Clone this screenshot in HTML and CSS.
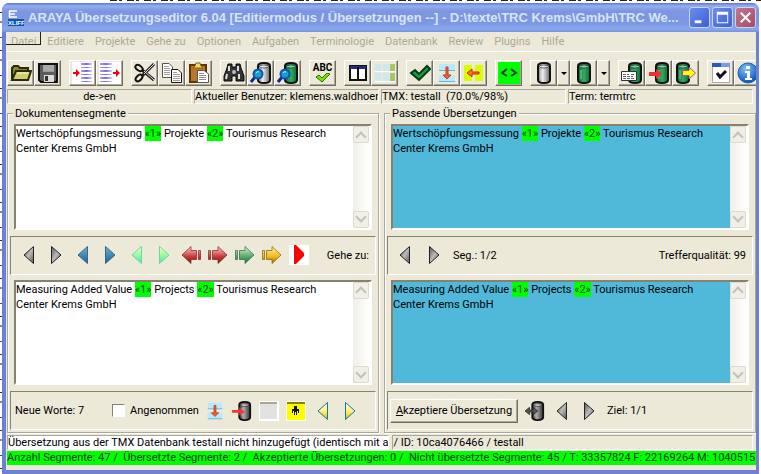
FILE: index.html
```html
<!DOCTYPE html>
<html lang="de">
<head>
<meta charset="utf-8">
<title>ARAYA Übersetzungseditor</title>
<link rel="stylesheet" href="styles.css">
</head>
<body>
<svg class="defs" aria-hidden="true">
  <defs>
    <linearGradient id="gGrey"><stop offset="0" stop-color="#777"/><stop offset=".4" stop-color="#eee"/><stop offset="1" stop-color="#666"/></linearGradient>
    <linearGradient id="gDark"><stop offset="0" stop-color="#333"/><stop offset=".4" stop-color="#aaa"/><stop offset="1" stop-color="#333"/></linearGradient>
    <linearGradient id="gGreen"><stop offset="0" stop-color="#0a6a36"/><stop offset=".5" stop-color="#2fae62"/><stop offset="1" stop-color="#0a6a36"/></linearGradient>
    <linearGradient id="tGrey" x2="1" y2="1"><stop offset="0" stop-color="#555"/><stop offset=".5" stop-color="#bbb"/><stop offset="1" stop-color="#555"/></linearGradient>
    <linearGradient id="tBlue" x2="0" y2="1"><stop offset="0" stop-color="#6fb4d0"/><stop offset="1" stop-color="#1f5f96"/></linearGradient>
    <linearGradient id="tMint" x2="0" y2="1"><stop offset="0" stop-color="#ffffb0"/><stop offset="1" stop-color="#3cf09c"/></linearGradient>
    <linearGradient id="tGold" x2="0" y2="1"><stop offset="0" stop-color="#fff"/><stop offset=".5" stop-color="#fff080"/><stop offset="1" stop-color="#e0b800"/></linearGradient>
    <linearGradient id="aRed" x2="0" y2="1"><stop offset="0" stop-color="#ffd0d0"/><stop offset=".6" stop-color="#c83838"/><stop offset="1" stop-color="#801010"/></linearGradient>
    <linearGradient id="aGreen" x2="0" y2="1"><stop offset="0" stop-color="#d8f4d8"/><stop offset=".6" stop-color="#58a868"/><stop offset="1" stop-color="#1c6c3c"/></linearGradient>
    <linearGradient id="aGold" x2="0" y2="1"><stop offset="0" stop-color="#fff4a0"/><stop offset=".6" stop-color="#f0b818"/><stop offset="1" stop-color="#a06800"/></linearGradient>
    <linearGradient id="lines"><stop offset="0" stop-color="#b49cf4"/><stop offset=".5" stop-color="#7468e4"/><stop offset="1" stop-color="#d8ccff"/></linearGradient>
    <radialGradient id="info" cx=".4" cy=".3" r=".7"><stop offset="0" stop-color="#7fc4ff"/><stop offset="1" stop-color="#0a50b8"/></radialGradient>

    <g id="can"><path d="M5 4Q5 1 11 1T17 4V18Q17 21 11 21T5 18Z" stroke="#111" stroke-width="2"/><ellipse cx="11" cy="4.500" rx="4.500" ry="1.500" fill="#fff" fill-opacity=".45" stroke="#111" stroke-opacity=".6"/><path d="M8 8V17" stroke="#fff" stroke-opacity=".5" stroke-width="1" fill="none"/></g>
    <symbol id="i-open" viewBox="0 0 22 22"><path d="M2 17V6L4 4H8L10 6H18V9" fill="#8a8632" stroke="#2c2a08" stroke-width="2"/><path d="M2 18L6 9H21L18 18Z" fill="#d0cc70" stroke="#2c2a08" stroke-width="2"/><path d="M7 11H18" stroke="#fffcc0" stroke-width="1"/></symbol>
    <symbol id="i-save" viewBox="0 0 22 22"><path d="M2 2H20V20H4L2 18Z" fill="#5c5c5c" stroke="#111" stroke-width="2"/><path d="M6 3H17V10H6Z" fill="#999"/><path d="M6 4H17M6 6H17M6 8H17" stroke="#bbb"/><path d="M7 13H17V20H7Z" fill="#ddd"/><path d="M8 14H11V19H8Z" fill="#333"/></symbol>
    <symbol id="i-in" viewBox="0 0 22 22"><path fill="#fff" d="M0 0H22V22H0Z"/><path fill="url(#lines)" d="M9 1H20V3H9ZM9 5H20V6H9ZM9 8H20V10H9ZM9 12H20V13H9ZM9 15H20V17H9ZM9 19H20V20H9Z"/><path fill="#f00010" d="M1 10H4V7L8 11L4 15V12H1Z"/></symbol>
    <symbol id="i-out" viewBox="0 0 22 22"><path fill="#fff" d="M0 0H22V22H0Z"/><path fill="url(#lines)" d="M1 1H13V3H1ZM1 5H13V6H1ZM1 8H13V10H1ZM1 12H13V13H1ZM1 15H13V17H1ZM1 19H13V20H1Z"/><path fill="#f00010" d="M14 10H17V7L21 11L17 15V12H14Z"/></symbol>
    <symbol id="i-cut" viewBox="0 0 22 22"><path d="M20 2L8 14M20 18L8 8" stroke="#222" stroke-width="3"/><path d="M20 2L10 12M20 18L10 9" stroke="#ddd" stroke-width="1"/><ellipse cx="5" cy="6" rx="4" ry="2.500" transform="rotate(35 5 6)" fill="none" stroke="#111" stroke-width="2"/><ellipse cx="5" cy="16" rx="4" ry="2.500" transform="rotate(-45 5 16)" fill="none" stroke="#111" stroke-width="2"/></symbol>
    <symbol id="i-copy" viewBox="0 0 22 22"><g fill="#fff" stroke="#555"><path d="M1.500 1.500H8L11.500 5V15.500H1.500Z"/><path d="M10.500 7.500H17L20.500 11V20.500H10.500Z" stroke="#111"/></g><path d="M3 4.500H8M3 6.500H9M3 8.500H9M3 10.500H9M3 12.500H9M12 10.500H16M12 12.500H19M12 14.500H19M12 16.500H19M12 18.500H19" stroke="#a59a94"/></symbol>
    <symbol id="i-paste" viewBox="0 0 22 22"><path d="M2 3H18V20H2Z" fill="#b87828" stroke="#5c3608" stroke-width="2"/><path d="M7 4L8 1H12L13 4L15 6H5Z" fill="#f8dc58" stroke="#806010"/><path d="M9.500 8.500H16L20.500 12V20.500H9.500Z" fill="#fff" stroke="#555"/><path d="M11 11.500H16M11 13.500H18M11 15.500H18M11 17.500H18" stroke="#918b88"/></symbol>
    <symbol id="i-find" viewBox="0 0 22 22"><path d="M5 2H9V5H13V2H17L18 6L21 14V19H13V14H9V19H1V14L4 6Z" fill="#333" stroke="#080808"/><path d="M6 4V9M15 4V9M4 12L3 17M16 12L16 17" stroke="#ddd" stroke-width="2"/><circle cx="11" cy="10" r="2" fill="#bbb"/></symbol>
    <g id="lens"><path d="M6 14L1 20" stroke="#102890" stroke-width="3"/><circle cx="8" cy="12" r="4.500" fill="#18a0c8" stroke="#1850b0" stroke-width="2"/><path d="M6 11Q7 9 9 10" stroke="#9ff" fill="none"/></g>
    <symbol id="i-findgrey" viewBox="0 0 22 22"><use href="#can" x="3" fill="url(#gGrey)"/><use href="#lens"/></symbol>
    <symbol id="i-findgreen" viewBox="0 0 22 22"><use href="#can" x="3" fill="url(#gGreen)"/><use href="#lens"/></symbol>
    <symbol id="i-tick" viewBox="0 0 22 22"><path d="M2 11L6 8L10 12L18 4L21 7L10 18Z" fill="#18a040" stroke="#063c14" stroke-width="2"/></symbol>
    <symbol id="i-smalltick" viewBox="0 0 16 10"><path d="M1 4L4 2L7 5L12 0L15 1L7 9Z" fill="#7ce000" stroke="#2c7400"/></symbol>
    <symbol id="i-cols" viewBox="0 0 22 22"><path fill="#fff" stroke="#111" stroke-width="2" d="M3 4H19V18H3Z"/><path fill="#2a2a80" d="M3 4H19V7H3Z"/><path fill="#111" d="M10 5H12V18H10Z"/></symbol>
    <symbol id="i-grid" viewBox="0 0 22 22"><path fill="#cbe9ec" d="M1 2H7V9H1ZM9 2H15V9H9ZM1 11H7V19H1ZM9 11H15V19H9Z"/><path fill="#aac26c" d="M16 2H21V9H16ZM16 11H21V19H16Z"/><path d="M1 9.500H21M1 19.500H21" stroke="#fff"/></symbol>
    <symbol id="i-down" viewBox="0 0 22 22"><path fill="#b9e9fb" d="M3 2H19V9H3ZM3 13H19V20H3Z"/><path stroke="#58bce8" d="M3 8.500H19M3 19.500H19"/><path fill="#f06030" stroke="#c83c20" d="M10 5H12V13H15L11 17L7 13H10Z"/></symbol>
    <symbol id="i-left" viewBox="0 0 22 22"><path fill="#d8ff00" d="M1 3H9V19H1ZM12 3H20V19H12Z"/><path fill="#f08000" stroke="#d02000" d="M4 11L9 7V10H16V12H9V15Z"/></symbol>
    <symbol id="i-tags" viewBox="0 0 22 22"><path fill="#0f0" d="M0 0H22V22H0Z"/><path d="M9 7L4 11L9 14M13 7L18 11L13 14" fill="none" stroke="#063c06" stroke-width="2"/></symbol>
    <symbol id="i-cangrey" viewBox="0 0 22 22"><use href="#can" fill="url(#gGrey)"/></symbol>
    <symbol id="i-cangreen" viewBox="0 0 22 22"><use href="#can" fill="url(#gGreen)"/></symbol>
    <symbol id="i-cancard" viewBox="0 0 22 22"><use href="#can" x="3" fill="url(#gGreen)"/><path fill="#fff" stroke="#333" d="M.5 9.500H15.500V18.500H.5Z"/><path stroke="#666" stroke-dasharray="3 1" d="M2 12.500H8M10 12.500H14M2 14.500H12M2 16.500H13"/></symbol>
    <symbol id="i-canin" viewBox="0 0 22 22"><use href="#can" x="3" fill="url(#gGreen)"/><path fill="#f03030" d="M1 10H8V7L14 12L8 17V14H1Z"/></symbol>
    <symbol id="i-canout" viewBox="0 0 22 22"><use href="#can" x="-3" fill="url(#gGreen)"/><path fill="#ff0" stroke="#a85090" d="M7.500 8.500H14V5L20.500 11L14 17V13.500H7.500Z"/></symbol>
    <symbol id="i-check" viewBox="0 0 22 22"><path fill="#fff" stroke="#aaa" d="M2.500 1.500H19.500V20.500H2.500Z"/><path fill="#2858c0" d="M2 1H20V5H2Z"/><path fill="#7a9ae8" d="M11 1H20V5H11Z"/><path d="M7 11L10 15L16 9" fill="none" stroke="#111" stroke-width="3"/></symbol>
    <symbol id="i-info" viewBox="0 0 22 22"><circle cx="11" cy="11" r="10" fill="url(#info)" stroke="#1c60b4"/><path fill="#fff" d="M9 4H13V7H9ZM8 9H13V16H15V18H8V16H10V11H8Z"/></symbol>
    <symbol id="i-candark" viewBox="0 0 22 22"><use href="#can" x="3" fill="url(#gDark)"/><path fill="#f03838" d="M0 10H8V7L14 12L8 16V13H0Z"/></symbol>
    <symbol id="i-canboth" viewBox="0 0 22 22"><use href="#can" x="3" fill="url(#gDark)"/><path fill="#555" stroke="#333" d="M0 11L5 7V10H9V7L14 11L9 15V12H5V15Z"/></symbol>
    <symbol id="i-box" viewBox="0 0 20 20"><path fill="#fff" d="M0 0H20V20H0Z"/><path fill="#e2e2e2" d="M1 1H18V18H1Z"/><path fill="#aaa690" d="M1 1H18V3H1Z"/></symbol>
    <symbol id="i-man" viewBox="0 0 20 20"><path fill="#fff" d="M0 0H20V20H0Z"/><path fill="#ff0" d="M1 1H19V19H1Z"/><path fill="#8a8200" d="M1 1H19V3H1Z"/><path fill="#111" d="M8 5H11V8H8ZM6 8H13V12H12V10H11V14H10V11H9V14H8V10H7V12H6Z"/></symbol>
    <symbol id="i-prev" viewBox="0 0 12 20"><path d="M10.500 1.500V18.500L1 10Z"/></symbol>
    <symbol id="i-next" viewBox="0 0 12 20"><path d="M1.500 1.500V18.500L11 10Z"/></symbol>
    <symbol id="i-arrow" viewBox="0 0 20 20"><path stroke-opacity=".7" d="M.5 5.500H2.500V14.500H.5ZM4.500 5.500H10V1.500L19 10L10 18.500V14.500H4.500Z"/></symbol>
    <symbol id="i-play" viewBox="0 0 20 20"><path fill="#fff" d="M0 0H20V20H0Z"/><path fill="#f00" d="M5 0H7L15 8V11L7 19H5Z"/></symbol>
  </defs>
</svg>

<div class="window">
  <header class="titlebar">
    <svg class="logo" viewBox="0 0 16 16" aria-hidden="true"><path d="M1 1H9M1 4H7M1 7H9M1.500 1V7" stroke="#fff" stroke-width="1.500"/><path fill="#0a58b0" d="M0 9H16V16H0Z"/><text x="0" y="15" class="logo-text">XLIFF</text></svg>
    <h1>ARAYA Übersetzungseditor 6.04 [Editiermodus / Übersetzungen --] - D:\texte\TRC Krems\GmbH\TRC We...</h1>
    <div class="controls">
      <button aria-label="Minimieren"><svg viewBox="0 0 20 20"><path fill="#fff" d="M5 13H12V16H5Z"/></svg></button>
      <button aria-label="Maximieren"><svg viewBox="0 0 20 20"><path fill="#fff" fill-rule="evenodd" d="M4 4H16V16H4ZM5 7V15H15V7Z"/></svg></button>
      <button class="close" aria-label="Schließen"><svg viewBox="0 0 20 20"><path stroke="#fff" stroke-width="2" d="M5 5L15 15M15 5L5 15"/></svg></button>
    </div>
  </header>

  <div class="client">
    <nav class="menu">
      <button class="current">Datei</button><button>Editiere</button><button>Projekte</button><button>Gehe zu</button><button>Optionen</button><button>Aufgaben</button><button>Terminologie</button><button>Datenbank</button><button>Review</button><button>Plugins</button><button>Hilfe</button>
    </nav>

    <div class="toolbar" role="toolbar">
      <div class="set"><button aria-label="Öffnen"><svg><use href="#i-open"/></svg></button><button aria-label="Speichern"><svg><use href="#i-save"/></svg></button></div>
      <div class="set"><button aria-label="Import"><svg><use href="#i-in"/></svg></button><button aria-label="Export"><svg><use href="#i-out"/></svg></button></div>
      <div class="set"><button aria-label="Ausschneiden"><svg><use href="#i-cut"/></svg></button><button aria-label="Kopieren"><svg><use href="#i-copy"/></svg></button><button aria-label="Einfügen"><svg><use href="#i-paste"/></svg></button></div>
      <div class="set"><button aria-label="Suchen"><svg><use href="#i-find"/></svg></button><button aria-label="TMX durchsuchen"><svg><use href="#i-findgrey"/></svg></button><button aria-label="Terme durchsuchen"><svg><use href="#i-findgreen"/></svg></button></div>
      <div class="set"><button class="spell">ABC<svg><use href="#i-smalltick"/></svg></button></div>
      <div class="set"><button aria-label="Spalten"><svg><use href="#i-cols"/></svg></button><button aria-label="Tabelle"><svg><use href="#i-grid"/></svg></button></div>
      <div class="set"><button aria-label="Akzeptieren"><svg><use href="#i-tick"/></svg></button><button aria-label="Nach unten"><svg><use href="#i-down"/></svg></button><button aria-label="Übernehmen"><svg><use href="#i-left"/></svg></button></div>
      <div class="set"><button aria-label="Tags"><svg><use href="#i-tags"/></svg></button></div>
      <div class="set"><button aria-label="TMX Datenbank"><svg><use href="#i-cangrey"/></svg></button><button class="drop" aria-label="TMX Auswahl"></button><button aria-label="Termdatenbank"><svg><use href="#i-cangreen"/></svg></button><button class="drop" aria-label="Term Auswahl"></button></div>
      <div class="set"><button aria-label="Term bearbeiten"><svg><use href="#i-cancard"/></svg></button><button aria-label="Term hinzufügen"><svg><use href="#i-canin"/></svg></button><button aria-label="Term ausgeben"><svg><use href="#i-canout"/></svg></button></div>
      <div class="set"><button aria-label="Prüfen"><svg><use href="#i-check"/></svg></button><button aria-label="Info"><svg><use href="#i-info"/></svg></button></div>
    </div>

    <div class="facts">
      <span class="cell middle">de-&gt;en</span><span class="cell">Aktueller Benutzer: klemens.waldhoer</span><span class="cell">TMX: testall&nbsp; (70.0%/98%)</span><span class="cell">Term: termtrc</span>
    </div>

    <main class="panes">
      <section class="pane">
        <h2>Dokumentensegmente</h2>
        <div class="editor">
          <div class="text" role="textbox" aria-label="Quelle">Wertschöpfungsmessung <mark>«1»</mark> Projekte <mark>«2»</mark> Tourismus Research<br>Center Krems GmbH</div>
          <div class="scroll"><button disabled aria-label="Hoch"></button><button class="dn" disabled aria-label="Runter"></button></div>
        </div>
        <div class="strip nav">
          <button aria-label="Zurück"><svg class="tri grey"><use href="#i-prev"/></svg></button>
          <button aria-label="Vor"><svg class="tri grey"><use href="#i-next"/></svg></button>
          <button aria-label="Zurück blau"><svg class="tri blue"><use href="#i-prev"/></svg></button>
          <button aria-label="Vor blau"><svg class="tri blue"><use href="#i-next"/></svg></button>
          <button aria-label="Zurück grün"><svg class="tri mint"><use href="#i-prev"/></svg></button>
          <button aria-label="Vor grün"><svg class="tri mint"><use href="#i-next"/></svg></button>
          <button aria-label="Pfeil zurück"><svg class="big red flip"><use href="#i-arrow"/></svg></button>
          <button aria-label="Pfeil vor"><svg class="big red"><use href="#i-arrow"/></svg></button>
          <button aria-label="Pfeil grün"><svg class="big green"><use href="#i-arrow"/></svg></button>
          <button aria-label="Pfeil gelb"><svg class="big gold"><use href="#i-arrow"/></svg></button>
          <button aria-label="Start"><svg class="big"><use href="#i-play"/></svg></button>
          <span class="end">Gehe zu:</span>
        </div>
        <div class="editor">
          <div class="text" role="textbox" aria-label="Ziel">Measuring Added Value <mark>«1»</mark> Projects <mark>«2»</mark> Tourismus Research<br>Center Krems GmbH</div>
          <div class="scroll"><button disabled aria-label="Hoch"></button><button class="dn" disabled aria-label="Runter"></button></div>
        </div>
        <div class="strip state">
          <span class="words">Neue Worte: 7</span>
          <label class="accept"><input type="checkbox">Angenommen</label>
          <button aria-label="Nach unten"><svg class="big"><use href="#i-down"/></svg></button>
          <button aria-label="In Datenbank"><svg class="big"><use href="#i-candark"/></svg></button>
          <button aria-label="Leer"><svg class="big"><use href="#i-box"/></svg></button>
          <button aria-label="Person"><svg class="big"><use href="#i-man"/></svg></button>
          <button aria-label="Zurück gelb"><svg class="tri yellow"><use href="#i-prev"/></svg></button>
          <button aria-label="Vor gelb"><svg class="tri yellow"><use href="#i-next"/></svg></button>
        </div>
      </section>

      <section class="pane match">
        <h2>Passende Übersetzungen</h2>
        <div class="editor">
          <div class="text" role="textbox" aria-label="Treffer Quelle">Wertschöpfungsmessung <mark>«1»</mark> Projekte <mark>«2»</mark> Tourismus Research<br>Center Krems GmbH</div>
          <div class="scroll"><button disabled aria-label="Hoch"></button><button class="dn" disabled aria-label="Runter"></button></div>
        </div>
        <div class="strip nav">
          <button aria-label="Zurück"><svg class="tri grey"><use href="#i-prev"/></svg></button>
          <button aria-label="Vor"><svg class="tri grey"><use href="#i-next"/></svg></button>
          <span class="count">Seg.: 1/2</span>
          <span class="end">Trefferqualität: 99</span>
        </div>
        <div class="editor">
          <div class="text" role="textbox" aria-label="Treffer Ziel">Measuring Added Value <mark>«1»</mark> Projects <mark>«2»</mark> Tourismus Research<br>Center Krems GmbH</div>
          <div class="scroll"><button disabled aria-label="Hoch"></button><button class="dn" disabled aria-label="Runter"></button></div>
        </div>
        <div class="strip state">
          <button class="push"><span><u>A</u>kzeptiere Übersetzung</span></button>
          <button aria-label="Datenbank"><svg class="big"><use href="#i-canboth"/></svg></button>
          <button aria-label="Zurück"><svg class="tri grey"><use href="#i-prev"/></svg></button>
          <button aria-label="Vor"><svg class="tri grey"><use href="#i-next"/></svg></button>
          <span class="count">Ziel: 1/1</span>
        </div>
      </section>
    </main>

    <footer>
      <div class="messages"><span class="cell white">Übersetzung aus der TMX Datenbank testall nicht hinzugefügt (identisch mit a</span><span class="cell">/ ID: 10ca4076466 / testall</span></div>
      <p class="totals">Anzahl Segmente: 47 /&nbsp; Übersetzte Segmente: 2 /&nbsp; Akzeptierte Übersetzungen: 0 /&nbsp; Nicht übersetzte Segmente: 45 / T: 33357824 F: 22169264 M: 1040515</p>
    </footer>
  </div>
</div>
</body>
</html>
```

FILE: styles.css
```css
* { box-sizing: border-box; }

body {
  margin: 0;
  padding: 3px 2px 0;
  min-height: 100vh;
  display: flex;
  font: 11px/15px Roboto, sans-serif;
  color: #000;
  background:
    repeating-linear-gradient(90deg, #fff 0 5px, #222 5px 12px, #fff 12px 14px, #222 14px 17px) 105px 0 / 100% 1px no-repeat,
    repeating-linear-gradient(#fff 0 12px, #333 12px 13px, #fff 13px 21px, #8a8a8a 21px 23px, #fff 23px 37px, #3648a0 37px 38px) 0 0 / 2px 100% no-repeat,
    #fff;
}

button { font: inherit; color: inherit; border: 0; padding: 0; background: none; }
svg { display: block; }
.defs { position: absolute; width: 0; height: 0; }

.window {
  flex: 1;
  min-width: 0;
  display: flex;
  flex-direction: column;
  border: solid #6c80d8;
  border-width: 0 3px 4px 4px;
  border-radius: 7px 7px 0 0;
  background: #7a96df;
}

.titlebar {
  height: 29px;
  flex: none;
  display: flex;
  align-items: center;
  gap: 4px;
  margin: 0 -3px 0 -4px;
  padding: 0 3px 0 6px;
  border-radius: 7px 7px 0 0;
  background: linear-gradient(#6078d0, #94aef0 3px, #7c96e0 8px, #7c98e2 20px, #86a8ee 26px, #7890dc);
}
.logo { width: 16px; height: 16px; flex: none; }
.logo-text { font: bold 6px "Liberation Sans", sans-serif; fill: #fff; }
h1 {
  flex: 1;
  min-width: 0;
  margin: 0;
  overflow: hidden;
  white-space: nowrap;
  font: bold 13px/18px "Liberation Sans", sans-serif;
  color: #d8e4f8;
}
.controls { display: flex; gap: 2px; }
.controls button {
  width: 21px;
  height: 21px;
  border: 1px solid #c8d4f8;
  border-radius: 3px;
  background: linear-gradient(135deg, #6c8cec, #3c60d4);
}
.controls .close { background: linear-gradient(135deg, #c07890, #a84c60); }

.client {
  flex: 1;
  min-width: 0;
  display: flex;
  flex-direction: column;
  overflow: hidden;
  background: #ece9d8;
}

.menu { display: flex; flex: none; gap: 1px; height: 20px; border-bottom: 1px solid #fff; }
.menu button { position: relative; padding: 0 5px; color: #aca899; }
.menu .current::after {
  content: "";
  position: absolute;
  inset: 0 0 6px;
  border: solid #222;
  border-width: 0 1px 1px 0;
}

.toolbar { display: flex; flex: none; gap: 8px; padding: 8px 0 3px 1px; }
.set { display: flex; flex: none; }
.toolbar button {
  width: 27px;
  height: 26px;
  flex: none;
  display: grid;
  place-items: center;
  border: 1px solid;
  border-color: #fff #716f64 #716f64 #fff;
  box-shadow: inset -1px -1px #aca899;
}
.toolbar svg { width: 22px; height: 22px; }
.toolbar .drop { width: 13px; }
.drop::before { content: ""; border: 3px solid transparent; border-top-color: #000; border-bottom: 0; }
.toolbar .spell { align-content: center; line-height: 10px; font-size: 10px; font-weight: bold; }
.toolbar .spell svg { width: 16px; height: 10px; }

.facts { display: grid; grid-template-columns: repeat(4, 1fr); gap: 2px; flex: none; padding: 0 3px 0 1px; }
.cell {
  height: 15px;
  line-height: 14px;
  overflow: hidden;
  white-space: nowrap;
  border: 1px solid;
  border-color: #aca899 #fff #fff #aca899;
}
.middle { text-align: center; }
.white { background: #fff; }

.panes { flex: 1; display: grid; grid-template-columns: 1fr 1fr; gap: 5px; padding: 1px 0 1px 1px; }
.pane {
  position: relative;
  min-width: 0;
  display: flex;
  flex-direction: column;
  margin-top: 8px;
  padding: 0 2px 2px;
  border: 1px solid #aca899;
  box-shadow: 1px 1px #fff, inset 1px 1px #fff;
}
h2 {
  align-self: flex-start;
  height: 10px;
  line-height: 12px;
  margin: -6px 0 6px 3px;
  padding: 0 2px;
  font-size: 11px;
  font-weight: normal;
  background: #ece9d8;
}
.editor {
  flex: 1 1 0;
  min-height: 60px;
  display: flex;
  margin: 0 4px;
  border: 2px solid;
  border-color: #85826f #fff #fff #85826f;
  background: #fff;
}
.text { flex: 1; min-width: 0; white-space: nowrap; overflow: hidden; }
.match .text { background: #50b8d8; }
mark { background: #0f0; color: #064006; padding: 1px 0; }
.scroll {
  width: 17px;
  flex: none;
  display: flex;
  flex-direction: column;
  justify-content: space-between;
  background: linear-gradient(90deg, #f0efe8, #fff);
}
.scroll button {
  width: 16px;
  height: 17px;
  display: grid;
  place-items: center;
  border: 1px solid #dddace;
  border-radius: 2px;
  background: #f1efe6;
}
.scroll button::before {
  content: "";
  width: 6px;
  height: 6px;
  border: solid #c4c2b8;
  border-width: 2px 0 0 2px;
  transform: translateY(2px) rotate(45deg);
}
.scroll .dn::before { transform: translateY(-2px) rotate(225deg); }

.strip {
  height: 39px;
  flex: none;
  display: flex;
  align-items: center;
  margin: 6px 0 5px;
  padding: 0 4px;
  white-space: nowrap;
  border: 1px solid;
  border-color: #85826f #fff #fff #85826f;
}
.strip.state { margin-bottom: 0; }
.strip button { width: 27px; flex: none; display: grid; place-items: center; }
.match .strip { padding-left: 2px; }
.match .strip button { width: 29px; }
.end { margin-left: auto; padding-right: 2px; }
.count { margin-left: 5px; }
.words { flex: none; width: 97px; }
.accept { display: flex; align-items: center; gap: 5px; margin-right: 3px; }
.accept input {
  appearance: none;
  width: 13px;
  height: 13px;
  margin: 0;
  border: 1px solid;
  border-color: #85826f #fff #fff #85826f;
  background: #fff;
}
.match .strip .push {
  width: 128px;
  height: 24px;
  margin-right: 3px;
  border: 1px solid;
  border-color: #fff #716f64 #716f64 #fff;
  box-shadow: inset -1px -1px #aca899;
}
.match .state button { width: 27px; }

.tri { width: 12px; height: 20px; }
.big { width: 20px; height: 20px; }
.flip { transform: scaleX(-1); }
.grey { fill: url(#tGrey); stroke: #222; }
.blue { fill: url(#tBlue); stroke: #2c6c94; }
.mint { fill: url(#tMint); stroke: #68d8a8; }
.yellow { fill: url(#tGold); stroke: #187890; }
.red { fill: url(#aRed); stroke: #802020; }
.green { fill: url(#aGreen); stroke: #286848; }
.gold { fill: url(#aGold); stroke: #805810; }

footer { flex: none; padding: 1px 0 5px 1px; }
.messages { display: grid; grid-template-columns: max-content 1fr; gap: 3px; padding-right: 3px; }
.totals { margin: 1px 0 0; height: 14px; line-height: 14px; white-space: nowrap; overflow: hidden; background: #0f0; color: #063c06; }
```
